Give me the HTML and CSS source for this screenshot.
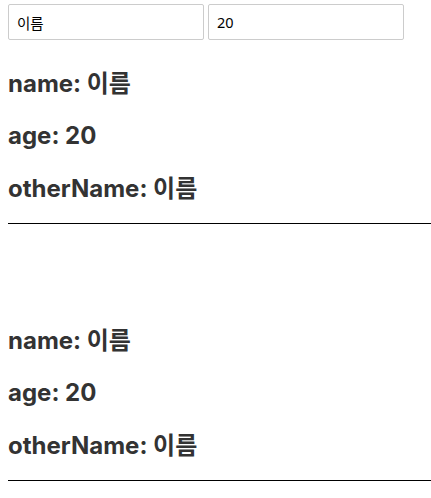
FILE: index.html
```html
<!DOCTYPE html>
<html lang="ko">
<head>
<meta charset="utf-8">
<link rel="stylesheet" href="styles.css">
</head>
<body>
<div class="app">
  <section class="block">
    <div class="inputs">
      <input class="field" type="text" value="이름">
      <input class="field" type="text" value="20">
    </div>
    <div class="info">
      <h2 class="line">name: 이름</h2>
      <h2 class="line">age: 20</h2>
      <h2 class="line">otherName: 이름</h2>
    </div>
    <hr class="rule">
  </section>
  <section class="block block-second">
    <div class="info">
      <h2 class="line">name: 이름</h2>
      <h2 class="line">age: 20</h2>
      <h2 class="line">otherName: 이름</h2>
    </div>
    <hr class="rule">
  </section>
</div>
</body>
</html>
```
FILE: styles.css
```css
html, body {
  margin: 0;
  background: #fff;
  overflow: hidden;
}
body {
  font-family: "Inter", "Noto Sans CJK KR", sans-serif;
  color: #333;
}
.app {
  padding: 4px 0 0 8px;
}
.inputs {
  display: flex;
  gap: 4px;
}
.field {
  width: 196px;
  height: 36px;
  box-sizing: border-box;
  border: 1px solid #ccc;
  border-radius: 2px;
  padding: 0 8px;
  margin: 0;
  font-family: "Noto Sans", "Noto Sans CJK KR", sans-serif;
  font-size: 14.5px;
  color: #000;
  background: #fff;
  outline: none;
}
.info {
  display: flex;
  flex-direction: column;
  gap: 20.6px;
  margin-top: 27.7px;
}
.line {
  margin: 0;
  font-size: 24px;
  font-weight: 700;
  line-height: 32px;
  color: #333;
}
.rule {
  margin: 18px 0 0;
  border: 0;
  height: 1px;
  background: #000;
}
.block-second .info {
  margin-top: 100.7px;
}
```
